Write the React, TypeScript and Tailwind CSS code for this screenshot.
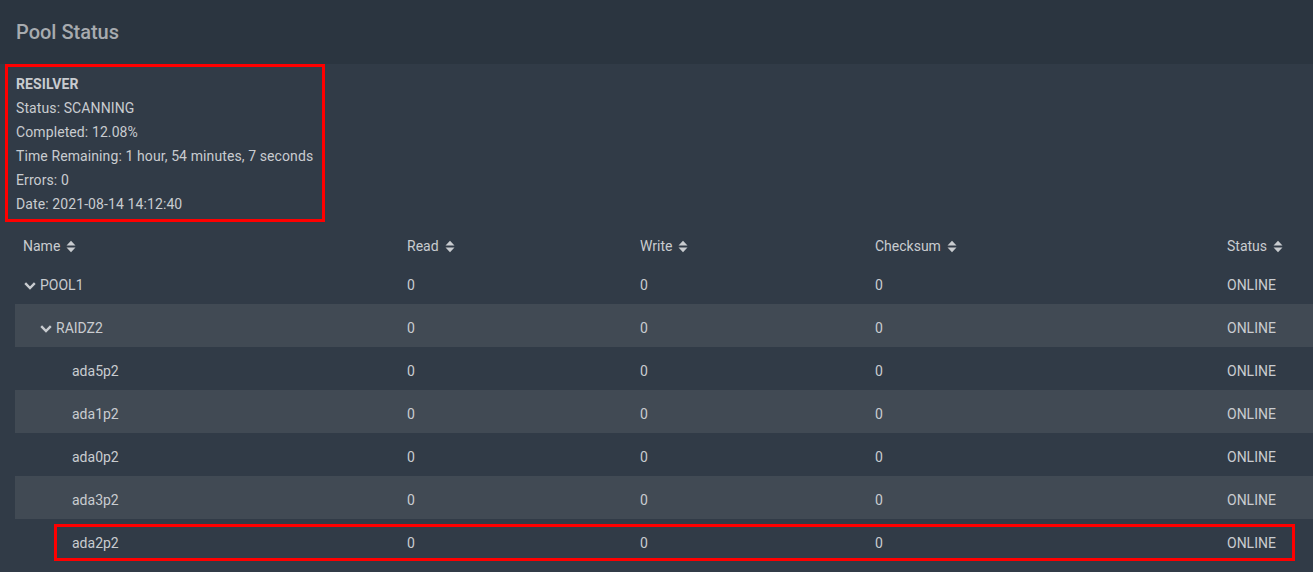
const rows = [
  { name: "POOL1", level: 0, expand: true },
  { name: "RAIDZ2", level: 1, expand: true },
  { name: "ada5p2", level: 2 },
  { name: "ada1p2", level: 2 },
  { name: "ada0p2", level: 2 },
  { name: "ada3p2", level: 2 },
  { name: "ada2p2", level: 2, marked: true },
];

function SortIcon() {
  return (
    <svg width="10" height="13" viewBox="0 0 10 13" className="ml-[6px] shrink-0">
      <path d="M0.5 5.5 L5 0.8 L9.5 5.5 Z" fill="#c9ccd0" />
      <path d="M0.5 7.5 L5 12.2 L9.5 7.5 Z" fill="#c9ccd0" />
    </svg>
  );
}

function Chevron() {
  return (
    <span className="w-[14px] h-[14px] flex items-center justify-center shrink-0">
      <svg width="12" height="8" viewBox="0 0 12 8">
        <polyline points="1.2,1.2 6,6 10.8,1.2" fill="none" stroke="#c9ccd0" strokeWidth="2.4" />
      </svg>
    </span>
  );
}

const cols = "grid grid-cols-[384px_233px_235px_352px_1fr]";

export default function App() {
  return (
    <div className="w-[1313px] h-[572px] overflow-hidden bg-[#313b47] text-[14px] text-[#c9ccd0] font-['Roboto',sans-serif]">
      <div className="h-[64px] bg-[#2b3540] flex items-center px-4">
        <h1 className="text-[20px] font-medium text-[#a7abaf]">Pool Status</h1>
      </div>

      <div className="ml-[5px] w-[320px] border-[3px] border-[#ff0000] pt-[5px] pb-[3px] pl-2 leading-[24px] tracking-[0.1px]">
        <div className="font-bold">RESILVER</div>
        <div>Status: SCANNING</div>
        <div>Completed: 12.08%</div>
        <div>Time Remaining: 1 hour, 54 minutes, 7 seconds</div>
        <div>Errors: 0</div>
        <div>Date: 2021-08-14 14:12:40</div>
      </div>

      <div className="ml-[15px]">
        <div className={`${cols} h-[39px] pt-[10px]`}>
          {["Name", "Read", "Write", "Checksum", "Status"].map((h) => (
            <div key={h} className="px-2 flex items-center">
              {h}
              <SortIcon />
            </div>
          ))}
        </div>

        {rows.map((r, i) => (
          <div
            key={r.name}
            className={`${cols} h-[43px] pt-[6px] relative ${i % 2 === 1 ? "bg-[#414a54]" : ""}`}
          >
            <div
              className="px-2 flex items-center gap-[3px]"
              style={{ paddingLeft: 8 + r.level * 16 }}
            >
              {r.expand ? <Chevron /> : <span className="w-[14px] shrink-0" />}
              <span>{r.name}</span>
            </div>
            <div className="px-2 flex items-center">0</div>
            <div className="px-2 flex items-center">0</div>
            <div className="px-2 flex items-center">0</div>
            <div className="px-2 flex items-center">ONLINE</div>
            {r.marked && (
              <div className="absolute left-[39px] top-[5px] w-[1241px] h-[37px] border-[3px] border-[#ff0000]" />
            )}
          </div>
        ))}
      </div>
    </div>
  );
}
